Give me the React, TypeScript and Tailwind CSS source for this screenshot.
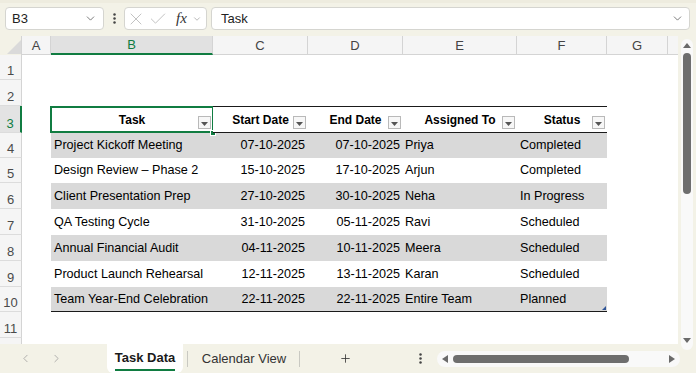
import { Check, ChevronDown, ChevronLeft, ChevronRight, Plus, X } from "lucide-react";

type Row = {
  task: string;
  start: string;
  end: string;
  who: string;
  status: string;
};

const ROWS: Row[] = [
  { task: "Project Kickoff Meeting", start: "07-10-2025", end: "07-10-2025", who: "Priya", status: "Completed" },
  { task: "Design Review – Phase 2", start: "15-10-2025", end: "17-10-2025", who: "Arjun", status: "Completed" },
  { task: "Client Presentation Prep", start: "27-10-2025", end: "30-10-2025", who: "Neha", status: "In Progress" },
  { task: "QA Testing Cycle", start: "31-10-2025", end: "05-11-2025", who: "Ravi", status: "Scheduled" },
  { task: "Annual Financial Audit", start: "04-11-2025", end: "10-11-2025", who: "Meera", status: "Scheduled" },
  { task: "Product Launch Rehearsal", start: "12-11-2025", end: "13-11-2025", who: "Karan", status: "Scheduled" },
  { task: "Team Year-End Celebration", start: "22-11-2025", end: "22-11-2025", who: "Entire Team", status: "Planned" },
];

const ROW_HEIGHTS = [25, 25, 26, 26, 26, 26, 25];

const gridCols = "grid grid-cols-[22px_29px_162px_95px_95px_114px_90px_61px_10px]";

function RowHead({ n, selected }: { n: number; selected?: boolean }) {
  return (
    <div
      className={`flex items-end justify-center pb-[1px] border-b border-[#dcdcdc] text-[13px] leading-[15px] ${
        selected
          ? "bg-[#e3e3e3] text-[#107c41] border-r-2 border-r-[#107c41]"
          : "bg-[#f5f5f5] text-[#4a4a4a] border-r border-r-[#d4d4d4]"
      }`}
    >
      {n}
    </div>
  );
}

function FilterBtn() {
  return (
    <span className="absolute right-[2px] bottom-[3px] flex h-[13px] w-[13px] items-end justify-center border border-[#b9b9b9] bg-[#f7f7f7] pb-[2px]">
      <svg width="7" height="4" viewBox="0 0 7 4">
        <polygon points="0,0 7,0 3.5,4" fill="#555" />
      </svg>
    </span>
  );
}

function HeadCell({ label, selected }: { label: string; selected?: boolean }) {
  return (
    <div className="relative flex items-center justify-center border-y border-[#1a1a1a] bg-white text-[12px] font-bold text-black">
      <span>{label}</span>
      <FilterBtn />
      {selected && (
        <>
          <span className="pointer-events-none absolute inset-[-1px] border-2 border-[#107c41]" />
          <span className="absolute bottom-[-4px] right-[-3px] h-[6px] w-[6px] border border-white bg-[#107c41]" />
        </>
      )}
    </div>
  );
}

function VTri({ up }: { up?: boolean }) {
  return (
    <svg width="8" height="5" viewBox="0 0 8 5">
      <polygon points={up ? "0,5 8,5 4,0" : "0,0 8,0 4,5"} fill="#6a6a6a" />
    </svg>
  );
}

function HTri({ left }: { left?: boolean }) {
  return (
    <svg width="6" height="8" viewBox="0 0 6 8">
      <polygon points={left ? "6,0 6,8 0,4" : "0,0 0,8 6,4"} fill="#6a6a6a" />
    </svg>
  );
}

function Dots() {
  return (
    <svg width="3" height="11" viewBox="0 0 3 11">
      <circle cx="1.5" cy="1.5" r="1.25" fill="#444" />
      <circle cx="1.5" cy="5.5" r="1.25" fill="#444" />
      <circle cx="1.5" cy="9.5" r="1.25" fill="#444" />
    </svg>
  );
}

export default function App() {
  return (
    <div
      className="relative h-[373px] w-[696px] overflow-hidden bg-[#f3f2e7] text-[#1a1a1a]"
      style={{ fontFamily: '"Liberation Sans", Arial, sans-serif' }}
    >
      {/* formula bar */}
      <div className="flex h-[36px] items-start border-t-[3px] border-[#eeecdf] pl-[5px] pr-[6px] pt-[4px]">
        <div className="flex h-[23px] w-[99px] items-center justify-between rounded-[4px] border border-[#d5d5d0] bg-white pl-[6px] pr-[6px]">
          <span className="text-[13px] text-[#222]">B3</span>
          <ChevronDown size={13} strokeWidth={1.4} color="#555" />
        </div>
        <div className="flex h-[23px] w-[20px] items-center justify-center">
          <Dots />
        </div>
        <div className="flex h-[23px] w-[83px] items-center rounded-[4px] border border-[#d5d5d0] bg-white pl-[1px]">
          <X size={20} strokeWidth={1} color="#b6b6b6" />
          <span className="ml-[2px]">
            <Check size={20} strokeWidth={1} color="#b6b6b6" />
          </span>
          <span
            className="ml-[8px] text-[15px] italic leading-none text-[#333]"
            style={{ fontFamily: '"Liberation Serif", "Times New Roman", serif' }}
          >
            fx
          </span>
          <span className="ml-[5px]">
            <ChevronDown size={10} strokeWidth={1.4} color="#888" />
          </span>
        </div>
        <div className="ml-[4px] flex h-[23px] flex-1 items-center justify-between rounded-[4px] border border-[#d5d5d0] bg-white pl-[9px] pr-[5px]">
          <span className="text-[13px] text-[#222]">Task</span>
          <ChevronDown size={13} strokeWidth={1.4} color="#555" />
        </div>
      </div>

      {/* sheet + vertical scrollbar */}
      <div className="flex h-[308px]">
        <div className="w-[678px]">
          {/* column headers */}
          <div className={`${gridCols} h-[19px] text-[13px] leading-[15px] text-[#444]`}>
            <div className="flex items-end justify-end border-r border-[#d4d4d4] pb-[1px]">
              <svg width="14" height="14" viewBox="0 0 14 14">
                <polygon points="14,0 14,14 0,14" fill="#dadada" />
              </svg>
            </div>
            {["A", "B", "C", "D", "E", "F", "G", ""].map((c) => (
              <div
                key={c || "H"}
                className={`flex items-center justify-center ${
                  c === "B"
                    ? "border-b-2 border-b-[#107c41] bg-[#e1e1e1] text-[#107c41]"
                    : "border-b border-b-[#d4d4d4] bg-[#f5f5f5]"
                } ${c ? "border-r border-r-[#d4d4d4]" : ""}`}
              >
                {c}
              </div>
            ))}
          </div>

          {/* body */}
          <div className="bg-white text-[12.6px] text-black">
            <div className={`${gridCols} h-[25px]`}>
              <RowHead n={1} />
            </div>
            <div className={`${gridCols} h-[26px]`}>
              <RowHead n={2} />
            </div>
            <div className={`${gridCols} h-[27px]`}>
              <RowHead n={3} selected />
              <div />
              <HeadCell label="Task" selected />
              <HeadCell label="Start Date" />
              <HeadCell label="End Date" />
              <HeadCell label="Assigned To" />
              <HeadCell label="Status" />
            </div>
            {ROWS.map((r, i) => {
              const band = i % 2 === 0 ? "bg-[#d9d9d9]" : "bg-white";
              const last = i === ROWS.length - 1;
              const cell = `flex items-center ${band} ${last ? "border-b border-[#1a1a1a]" : ""}`;
              return (
                <div key={r.task} className={gridCols} style={{ height: ROW_HEIGHTS[i] }}>
                  <RowHead n={i + 4} />
                  <div />
                  <div className={`${cell} pl-[3px]`}>{r.task}</div>
                  <div className={`${cell} justify-end pr-[3px]`}>{r.start}</div>
                  <div className={`${cell} justify-end pr-[3px]`}>{r.end}</div>
                  <div className={`${cell} pl-[2px]`}>{r.who}</div>
                  <div className={`${cell} relative pl-[3px]`}>
                    {r.status}
                    {last && (
                      <svg className="absolute bottom-[1px] right-[1px]" width="4" height="4" viewBox="0 0 4 4">
                        <polygon points="4,0 4,4 0,4" fill="#2f5597" />
                      </svg>
                    )}
                  </div>
                </div>
              );
            })}
            <div className={`${gridCols} h-[26px]`}>
              <RowHead n={11} />
            </div>
            <div className={`${gridCols} h-[6px]`}>
              <div className="bg-[#f5f5f5] border-r border-[#d4d4d4]" />
            </div>
          </div>
        </div>

        <div className="w-[18px] pl-[3px] pt-[3px]">
          <div className="flex h-[311px] w-[12px] flex-col items-center rounded-full bg-[#f9f9f9] pt-[4px]">
            <VTri up />
            <div className="mt-[5px] h-[141px] w-[8px] rounded-full bg-[#6e6e6e]" />
            <div className="flex-1" />
            <div className="mb-[7px]">
              <VTri />
            </div>
          </div>
        </div>
      </div>

      {/* sheet tabs */}
      <div className="flex h-[29px] items-stretch text-[13px]">
        <div className="flex w-[107px] items-center pl-[19px]">
          <ChevronLeft size={13} strokeWidth={1.4} color="#9a9a9a" />
          <span className="ml-[18px]">
            <ChevronRight size={13} strokeWidth={1.4} color="#9a9a9a" />
          </span>
        </div>
        <div className="relative flex w-[76px] items-center justify-center rounded-b-[6px] bg-white pb-[2px] font-bold text-[#1a1a1a]">
          <span className="relative">
            Task Data
            <span className="absolute bottom-[-4px] left-0 right-0 h-[2px] bg-[#107c41]" />
          </span>
        </div>
        <div className="flex items-center pl-[4px]">
          <div className="h-[16px] w-px bg-[#c9c9c2]" />
        </div>
        <div className="flex w-[111px] items-center justify-center pl-[1px] text-[#333]">Calendar View</div>
        <div className="flex items-center">
          <div className="h-[16px] w-px bg-[#c9c9c2]" />
        </div>
        <div className="flex w-[90px] items-center justify-center">
          <Plus size={13} strokeWidth={1.5} color="#333" />
        </div>
        <div className="flex w-[47px] items-center pl-[29px]">
          <Dots />
        </div>
        <div className="flex items-center">
          <div className="flex h-[16px] w-[243px] items-center rounded-full bg-[#f9f9f9] pl-[5px] pr-[5px]">
            <HTri left />
            <div className="ml-[5px] h-[8px] w-[176px] rounded-full bg-[#6e6e6e]" />
            <div className="flex-1" />
            <HTri />
          </div>
        </div>
      </div>
    </div>
  );
}
